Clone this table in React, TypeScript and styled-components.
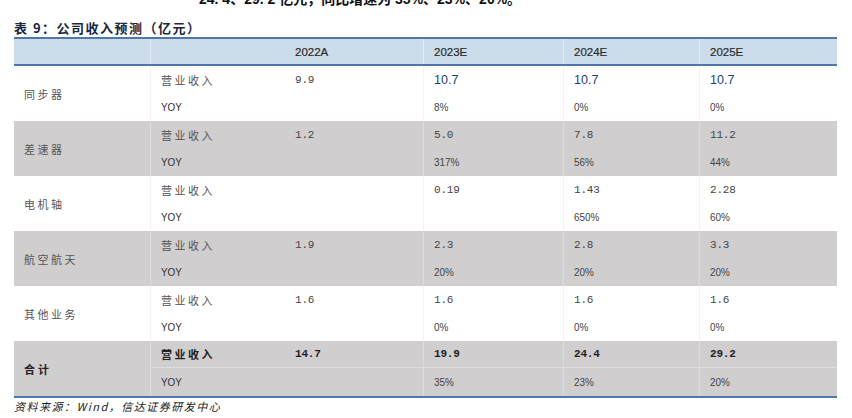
import React from 'react';
import styled, { createGlobalStyle } from 'styled-components';

const GlobalStyle = createGlobalStyle`
  html, body {
    margin: 0;
    padding: 0;
    background: #ffffff;
  }
`;

const COLS = '136px 135px 138px 140px 136px 138px';

const Page = styled.div`
  width: 852px;
  height: 418px;
  overflow: hidden;
  background: #fff;
`;

const CutLine = styled.div`
  height: 7px;
  overflow: hidden;
  padding-left: 199px;
`;

const CutText = styled.div`
  font-family: "Liberation Sans", "Noto Sans CJK SC", sans-serif;
  font-weight: bold;
  font-size: 14px;
  line-height: 16px;
  margin-top: -9px;
  color: #111;
  white-space: nowrap;
`;

const Caption = styled.div`
  margin: 12px 0 0 14px;
  height: 18px;
  font-family: "Noto Sans CJK SC", sans-serif;
  font-weight: bold;
  font-size: 13px;
  line-height: 18px;
  letter-spacing: 1.5px;
  color: #1b2640;
`;

const Table = styled.div`
  margin-left: 14px;
  width: 823px;
  border-bottom: 2px solid #4f77a9;
`;

const HeaderRow = styled.div`
  display: grid;
  grid-template-columns: ${COLS};
  height: 25px;
  background: #cddcea;
  border-top: 2px solid #4f77a9;
  border-bottom: 2px solid #4f77a9;
`;

const HeadCell = styled.div<{ $line?: boolean }>`
  display: flex;
  align-items: center;
  padding-left: 10px;
  font-family: "Liberation Sans", Arial, sans-serif;
  font-size: 11.5px;
  color: #2a2a2a;
  -webkit-text-stroke: 0.2px #2a2a2a;
  border-left: ${p => (p.$line ? '1px solid #e4ecf4' : 'none')};
`;

const Group = styled.div<{ $grey?: boolean }>`
  display: grid;
  grid-template-columns: ${COLS};
  grid-template-rows: 27px 28px;
  background: ${p => (p.$grey ? '#d0cecf' : '#ffffff')};
`;

const NameCell = styled.div<{ $bold?: boolean }>`
  grid-row: 1 / span 2;
  display: flex;
  align-items: center;
  padding-left: 10px;
  font-family: "Noto Sans CJK SC", sans-serif;
  font-size: 11px;
  letter-spacing: ${p => (p.$bold ? '3px' : '2.5px')};
  font-weight: ${p => (p.$bold ? 'bold' : 'normal')};
  color: ${p => (p.$bold ? '#222' : '#555')};
`;

const Cell = styled.div<{ $line?: boolean; $grey?: boolean; $split?: boolean }>`
  display: flex;
  align-items: center;
  padding-left: 10px;
  border-left: ${p =>
    p.$line ? `1px solid ${p.$grey ? '#dedcdd' : '#f3f3f3'}` : 'none'};
  border-bottom: ${p => (p.$split ? '1px solid #dedcdd' : 'none')};
`;

const Label = styled.span<{ $bold?: boolean }>`
  font-family: "Noto Sans CJK SC", sans-serif;
  font-size: 11px;
  letter-spacing: 2.5px;
  font-weight: ${p => (p.$bold ? 'bold' : 'normal')};
  color: ${p => (p.$bold ? '#222' : '#555')};
`;

const Yoy = styled.span`
  font-family: "Liberation Sans", Arial, sans-serif;
  font-size: 11px;
  transform: scaleX(0.9);
  transform-origin: left center;
  color: #333;
`;

const MonoNum = styled.span<{ $bold?: boolean }>`
  font-family: "Liberation Mono", "DejaVu Sans Mono", monospace;
  font-size: 11px;
  letter-spacing: -0.2px;
  font-weight: ${p => (p.$bold ? 'bold' : 'normal')};
  color: ${p => (p.$bold ? '#222' : '#444')};
`;

const SansNum = styled.span<{ $blue?: boolean }>`
  font-family: "Liberation Sans", Arial, sans-serif;
  font-size: ${p => (p.$blue ? '12.5px' : '11px')};
  color: ${p => (p.$blue ? '#1f3c72' : '#444')};
  ${p => (p.$blue ? '' : 'transform: scaleX(0.9); transform-origin: left center;')}
`;

const Footer = styled.div`
  margin: 0 0 0 14px;
  font-family: "Noto Sans CJK SC", sans-serif;
  font-size: 11px;
  font-style: italic;
  letter-spacing: 1.5px;
  color: #222;
`;

type Val = { text: string; kind: 'mono' | 'blue' | 'pct' | 'none' };

type Row = {
  name: string;
  grey?: boolean;
  total?: boolean;
  rev: Val[];
  yoy: Val[];
};

const m = (text: string): Val => ({ text, kind: 'mono' });
const b = (text: string): Val => ({ text, kind: 'blue' });
const p = (text: string): Val => ({ text, kind: 'pct' });
const none: Val = { text: '', kind: 'none' };

const rows: Row[] = [
  { name: '同步器', rev: [m('9.9'), b('10.7'), b('10.7'), b('10.7')], yoy: [none, p('8%'), p('0%'), p('0%')] },
  { name: '差速器', grey: true, rev: [m('1.2'), m('5.0'), m('7.8'), m('11.2')], yoy: [none, p('317%'), p('56%'), p('44%')] },
  { name: '电机轴', rev: [none, m('0.19'), m('1.43'), m('2.28')], yoy: [none, none, p('650%'), p('60%')] },
  { name: '航空航天', grey: true, rev: [m('1.9'), m('2.3'), m('2.8'), m('3.3')], yoy: [none, p('20%'), p('20%'), p('20%')] },
  { name: '其他业务', rev: [m('1.6'), m('1.6'), m('1.6'), m('1.6')], yoy: [none, p('0%'), p('0%'), p('0%')] },
  { name: '合计', grey: true, total: true, rev: [m('14.7'), m('19.9'), m('24.4'), m('29.2')], yoy: [none, p('35%'), p('23%'), p('20%')] },
];

const renderVal = (v: Val, bold?: boolean) => {
  if (v.kind === 'mono') return <MonoNum $bold={bold}>{v.text}</MonoNum>;
  if (v.kind === 'blue') return <SansNum $blue>{v.text}</SansNum>;
  if (v.kind === 'pct') return <SansNum>{v.text}</SansNum>;
  return null;
};

export default function App() {
  return (
    <Page>
      <GlobalStyle />
      <CutLine>
        <CutText>24. 4、29. 2 亿元，同比增速为 35%、23%、20%。</CutText>
      </CutLine>
      <Caption>表 9：公司收入预测（亿元）</Caption>
      <Table>
        <HeaderRow>
          <HeadCell />
          <HeadCell $line />
          <HeadCell>2022A</HeadCell>
          <HeadCell $line>2023E</HeadCell>
          <HeadCell $line>2024E</HeadCell>
          <HeadCell $line>2025E</HeadCell>
        </HeaderRow>
        {rows.map(r => (
          <Group key={r.name} $grey={r.grey}>
            <NameCell $bold={r.total}>{r.name}</NameCell>
            <Cell $line $grey={r.grey} $split={r.total}>
              <Label $bold={r.total}>营业收入</Label>
            </Cell>
            {r.rev.map((v, i) => (
              <Cell key={i} $line={i > 0} $grey={r.grey} $split={r.total}>
                {renderVal(v, r.total)}
              </Cell>
            ))}
            <Cell $line $grey={r.grey}>
              <Yoy>YOY</Yoy>
            </Cell>
            {r.yoy.map((v, i) => (
              <Cell key={i} $line={i > 0} $grey={r.grey}>
                {renderVal(v)}
              </Cell>
            ))}
          </Group>
        ))}
      </Table>
      <Footer>资料来源：Wind，信达证券研发中心</Footer>
    </Page>
  );
}
